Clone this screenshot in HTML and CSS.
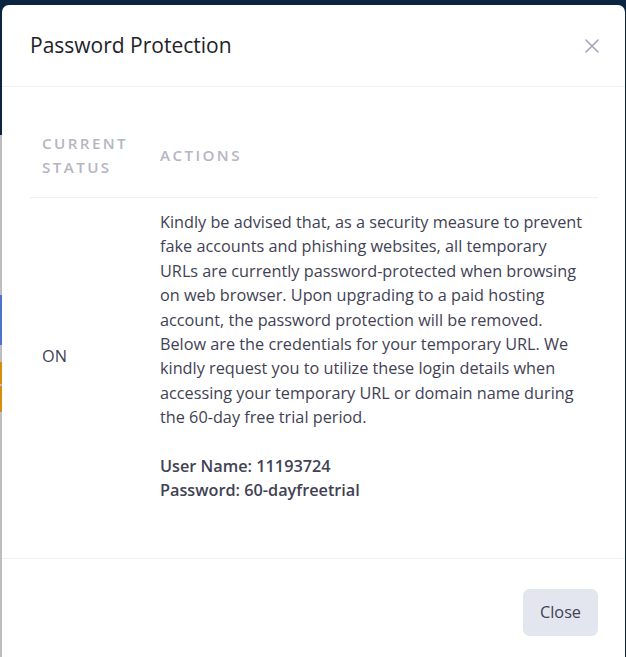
FILE: index.html
```html
<!DOCTYPE html>
<html lang="en">
<head>
<meta charset="utf-8">
<title>Password Protection</title>
<link rel="stylesheet" href="styles.css">
</head>
<body>
<div class="page-edge">
  <span class="seg seg-navy"></span>
  <span class="seg seg-grey seg-a"></span>
  <span class="seg seg-blue"></span>
  <span class="seg seg-grey seg-b"></span>
  <span class="seg seg-orange seg-c"></span>
  <span class="seg seg-grey seg-d"></span>
  <span class="seg seg-orange seg-e"></span>
  <span class="seg seg-grey seg-rest"></span>
</div>
<div class="modal">
  <div class="modal-header">
    <h2 class="modal-title">Password Protection</h2>
    <button class="modal-close" aria-label="Close">
      <svg width="14" height="14" viewBox="0 0 14 14"><path d="M1 1L13 13M13 1L1 13" stroke="#a1a5b7" stroke-width="1.6" stroke-linecap="round"/></svg>
    </button>
  </div>
  <div class="modal-body">
    <table class="status-table">
      <thead>
        <tr>
          <th class="col-status">Current Status</th>
          <th class="col-actions">Actions</th>
        </tr>
      </thead>
      <tbody>
        <tr>
          <td class="col-status">ON</td>
          <td class="col-actions">Kindly be advised that, as a security measure to prevent fake accounts and phishing websites, all temporary URLs are currently password-protected when browsing on web browser. Upon upgrading to a paid hosting account, the password protection will be removed. Below are the credentials for your temporary URL. We kindly request you to utilize these login details when accessing your temporary URL or domain name during the 60-day free trial period.<br><br><b>User Name: 11193724<br>Password: 60-dayfreetrial</b></td>
        </tr>
      </tbody>
    </table>
  </div>
  <div class="modal-footer">
    <button class="btn-close">Close</button>
  </div>
</div>
</body>
</html>
```

FILE: styles.css
```css
html, body {
  margin: 0;
  padding: 0;
}
body {
  background: #0b2540;
  display: flex;
  height: 657px;
  overflow: hidden;
  font-family: "Open Sans", "Liberation Sans", sans-serif;
}
.page-edge {
  width: 2px;
  flex: none;
  display: flex;
  flex-direction: column;
}
.seg { display: block; flex: none; }
.seg-navy { height: 135px; background: #0b2540; }
.seg-grey { background: #bdbdbf; }
.seg-a { height: 160px; }
.seg-blue { height: 50px; background: #4e72c9; }
.seg-b { height: 17px; }
.seg-orange { background: #d68d0b; }
.seg-c { height: 22px; }
.seg-d { height: 2px; }
.seg-e { height: 26px; }
.seg-rest { flex: 1; }

.modal {
  flex: 1;
  margin: 5px 1px 0 0;
  background: #fff;
  border-radius: 7px 7px 0 0;
  display: flex;
  flex-direction: column;
}
.modal-header {
  display: flex;
  align-items: center;
  justify-content: space-between;
  padding: 28px 26px 28px 28px;
  border-bottom: 1px solid #eff2f5;
}
.modal-title {
  margin: 0;
  font-size: 21px;
  line-height: 25px;
  font-weight: 400;
  color: #222228;
}
.modal-close {
  border: 0;
  background: none;
  padding: 0;
  width: 14px;
  height: 14px;
  display: flex;
}
.modal-body {
  padding: 30px 27px 43px 28px;
}
.status-table {
  width: 100%;
  border-collapse: collapse;
}
.status-table th {
  padding: 14px 12px 18px;
  text-align: left;
  vertical-align: middle;
  text-transform: uppercase;
  font-size: 15.2px;
  line-height: 24px;
  font-weight: 600;
  letter-spacing: 2.4px;
  color: #b5b5c3;
  border-bottom: 1px solid #eff2f5;
}
.status-table td {
  padding: 12px;
  vertical-align: middle;
  font-size: 16.25px;
  line-height: 1.5;
  color: #3f4254;
}
.status-table .col-status { width: 94px; }
.status-table b { font-weight: 600; }
.modal-footer {
  border-top: 1px solid #eff2f5;
  padding: 30px 27px;
  display: flex;
  justify-content: flex-end;
}
.btn-close {
  border: 0;
  background: #e4e6ef;
  color: #3f4254;
  font-family: "Open Sans", "Liberation Sans", sans-serif;
  font-size: 16.25px;
  line-height: 24.375px;
  padding: 11.5px 17px;
  border-radius: 6.5px;
}
```
